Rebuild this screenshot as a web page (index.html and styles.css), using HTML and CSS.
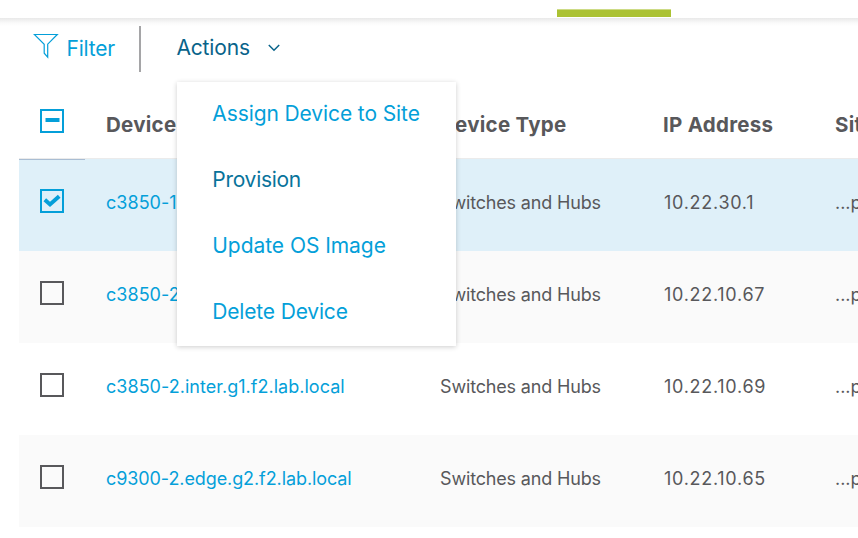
FILE: index.html
```html
<!DOCTYPE html>
<html lang="en">
<head>
<meta charset="utf-8">
<title>Device Inventory</title>
<link rel="stylesheet" href="styles.css">
</head>
<body>
<nav class="tabs"><span class="tab-active"></span></nav>
<main>
  <div class="toolbar">
    <a class="filter">
      <svg class="funnel" width="26" height="26" viewBox="0 0 26 26"><path d="M1.3 1.5H24.3L14.7 11.2V24.2L11.2 20.2V11.2Z"/></svg>
      <span class="filter-label">Filter</span>
    </a>
    <span class="divider"></span>
    <div class="actions">
      <span class="actions-label">Actions</span>
      <svg class="chevron" width="14" height="10" viewBox="0 0 14 10"><path d="M1.8 2L7 7.2L12.2 2"/></svg>
      <ul class="menu">
        <li><span class="m1">Assign Device to Site</span></li>
        <li class="current"><span class="m2">Provision</span></li>
        <li><span class="m3">Update OS Image</span></li>
        <li><span class="m4">Delete Device</span></li>
      </ul>
    </div>
  </div>
  <section class="table">
    <div class="row head">
      <div class="check-cell"><span class="box active"><svg width="20" height="20" viewBox="0 0 20 20"><path class="dash" d="M3.5 9H17.5"/></svg></span></div>
      <div>Device</div><div>Device Type</div><div>IP Address</div><div>Site</div>
    </div>
    <div class="row selected">
      <div class="check-cell"><span class="box active"><svg width="20" height="20" viewBox="0 0 20 20"><path class="tick" d="M2.8 8.8L8 13.4L17.2 5.2"/></svg></span></div>
      <div class="name">c3850-1</div><div class="type">Switches and Hubs</div><div class="ip">10.22.30.1</div><div>...p</div>
    </div>
    <div class="row shaded">
      <div class="check-cell"><span class="box"></span></div>
      <div class="name">c3850-2</div><div class="type">Switches and Hubs</div><div class="ip">10.22.10.67</div><div>...p</div>
    </div>
    <div class="row">
      <div class="check-cell"><span class="box"></span></div>
      <div class="name">c3850-2.inter.g1.f2.lab.local</div><div class="type">Switches and Hubs</div><div class="ip">10.22.10.69</div><div>...p</div>
    </div>
    <div class="row shaded">
      <div class="check-cell"><span class="box"></span></div>
      <div class="name n2">c9300-2.edge.g2.f2.lab.local</div><div class="type">Switches and Hubs</div><div class="ip">10.22.10.65</div><div>...p</div>
    </div>
  </section>
</main>
</body>
</html>
```
FILE: styles.css
```css
* { box-sizing: border-box; }
body {
  margin: 0;
  width: 858px;
  height: 538px;
  overflow: hidden;
  background: #fff;
  color: #58585b;
  font-family: Inter, "Liberation Sans", sans-serif;
  font-size: 18px;
}
.tabs { height: 18px; padding: 9px 0 1px 557px; }
.tab-active {
  display: block;
  width: 114px;
  height: 8px;
  background: #abc233;
  border-top: 1px solid #cddb85;
}
main {
  height: 520px;
  background: linear-gradient(#e9e9e9 0, #f0f0f0 2px, #fafafa 5px, #fff 8px);
}
.toolbar {
  display: flex;
  align-items: flex-start;
  height: 74px;
  padding: 8px 0 0 33px;
  font-size: 21px;
}
.filter { display: flex; width: 106px; padding-top: 7px; color: #049fd9; }
.funnel { flex: none; fill: none; stroke: #049fd9; stroke-width: 1.2; }
.filter-label { margin: 2px 0 0 7.5px; line-height: 28px; letter-spacing: -.2px; }
.divider { width: 2px; height: 46px; background: #a5a5a7; }
.actions {
  position: relative;
  display: flex;
  padding-left: 36px;
  color: #08638a;
}
.actions-label { width: 90px; margin-top: 8px; line-height: 28px; letter-spacing: -.15px; text-indent: -.6px; }
.chevron { margin-top: 17px; fill: none; stroke: #08638a; stroke-width: 1.5; }
.menu {
  position: absolute;
  z-index: 2;
  left: 36px;
  top: 56px;
  width: 279px;
  height: 264px;
  margin: 0;
  padding: 0;
  list-style: none;
  background: #fff;
  box-shadow: 0 1px 5px rgba(0, 0, 0, .2);
}
.menu li {
  height: 66px;
  padding-left: 35.3px;
  line-height: 64px;
  color: #049fd9;
  white-space: nowrap;
}
.menu .current { color: #08739b; }
.m1 { letter-spacing: -.1px; }
.m2 { letter-spacing: -.28px; }
.m3 { letter-spacing: -.05px; }
.m4 { letter-spacing: -.17px; }
.table { margin-left: 19px; }
.row {
  display: grid;
  grid-template-columns: 87px 334px 223px 172px 23px;
  height: 92px;
  line-height: 88px;
  white-space: nowrap;
}
.row > div:last-child { overflow: hidden; }
.head {
  height: 67px;
  line-height: 66px;
  font-size: 20.5px;
  letter-spacing: .27px;
  font-weight: 700;
  border-bottom: 1px solid #ebebeb;
}
.head .check-cell { padding-top: 17px; }
.check-cell { width: 66px; padding: 30px 0 0 21px; line-height: 0; }
.box {
  display: block;
  width: 24px;
  height: 24px;
  border: 2px solid #58585b;
}
.box svg { display: block; fill: none; stroke: #049fd9; stroke-width: 4; }
.active { border-color: #049fd9; }
.selected { background: #dff0f9; }
.selected .check-cell { padding-top: 29px; border-top: 1px solid #a9bdd3; }
.shaded { background: #fafafa; }
.name { color: #049fd9; letter-spacing: .03px; }
.n2 { letter-spacing: -.09px; }
.type { letter-spacing: -.17px; }
.ip { padding-left: 1px; letter-spacing: .72px; }
```
